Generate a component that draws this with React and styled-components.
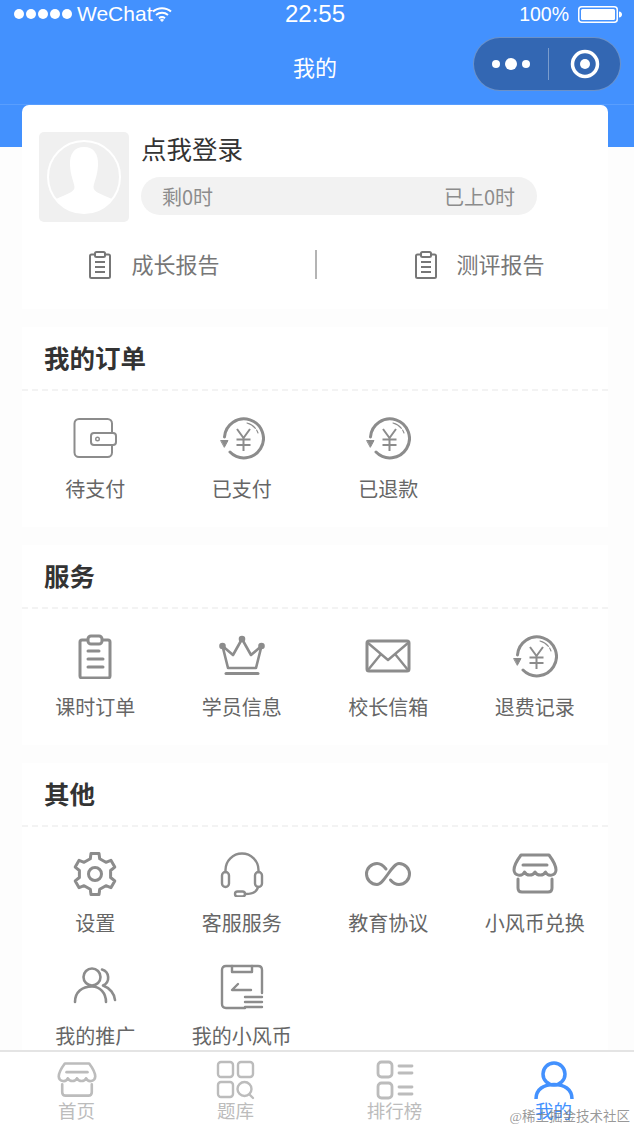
import React from "react";
import styled, { createGlobalStyle } from "styled-components";

const Global = createGlobalStyle`
  * { box-sizing: border-box; }
  html, body { margin: 0; padding: 0; background: #fff; }
  body { font-family: "Liberation Sans", "Noto Sans CJK SC", sans-serif; }
`;

const BLUE = "#4391fe";

const Page = styled.div`
  position: relative;
  width: 634px;
  height: 1130px;
  display: flex;
  flex-direction: column;
  overflow: hidden;
  background: #fff;
`;

const Header = styled.header`
  height: 105px;
  flex-shrink: 0;
  background: ${BLUE};
  border-bottom: 1px solid rgba(255, 255, 255, 0.12);
  color: #fff;
`;

const StatusBar = styled.div`
  height: 37px;
  padding: 0 12px 9px 14px;
  display: grid;
  grid-template-columns: 271px auto 1fr;
  align-items: center;
`;

const StatusLeft = styled.div`
  display: flex;
  align-items: center;
  font-size: 21px;
`;

const Signal = styled.div`
  display: flex;
  gap: 2px;
  margin-right: 5px;
`;

const SignalDot = styled.span`
  width: 10px;
  height: 10px;
  border-radius: 50%;
  background: #fff;
`;

const Clock = styled.div`
  font-size: 24px;
`;

const StatusRight = styled.div`
  display: flex;
  justify-content: flex-end;
  align-items: center;
  gap: 9px;
  font-size: 19.5px;
`;

const NavBar = styled.div`
  height: 67px;
  padding-right: 4px;
  display: grid;
  grid-template-columns: 1fr auto 1fr;
  align-items: start;
`;

const NavTitle = styled.div`
  grid-column: 2;
  margin-top: 13px;
  font-family: "Noto Sans CJK SC", sans-serif;
  font-size: 22px;
  line-height: 32px;
`;

const Capsule = styled.div`
  grid-column: 3;
  justify-self: end;
  margin-right: 9px;
  width: 148px;
  height: 54px;
  display: flex;
  align-items: center;
  padding-left: 17px;
  border-radius: 27px;
  background: #3367b3;
  border: 1.5px solid rgba(255, 255, 255, 0.28);
`;

const CapsuleLine = styled.span`
  width: 1px;
  height: 32px;
  margin: 0 21px 0 13px;
  background: rgba(255, 255, 255, 0.35);
`;

const Main = styled.main`
  flex: 1;
  min-height: 0;
  overflow: hidden;
  padding: 0 26px 0 22px;
  background: linear-gradient(${BLUE} 42px, #fdfdfd 42px);
  font-family: "Noto Sans CJK SC", sans-serif;
`;

const ProfileCard = styled.section`
  height: 204px;
  padding: 27px 17px 0;
  background: #fff;
  border-radius: 7px 7px 0 0;
`;

const ProfileTop = styled.div`
  display: flex;
  gap: 12px;
`;

const Avatar = styled.div`
  width: 90px;
  height: 90px;
  flex-shrink: 0;
  border-radius: 5px;
  background: #f0f0f0;
`;

const ProfileInfo = styled.div`
  display: flex;
  flex-direction: column;
  gap: 11px;
  margin-top: -2px;
`;

const Name = styled.div`
  font-size: 25.5px;
  line-height: 36px;
  color: #333;
`;

const HoursPill = styled.div`
  width: 396px;
  height: 38px;
  padding: 0 22px 0 21px;
  display: flex;
  align-items: center;
  justify-content: space-between;
  border-radius: 19px;
  background: #f2f2f2;
  font-size: 20px;
  color: #8c8c8c;
`;

const Reports = styled.div`
  margin: 28px -17px 0 -13px;
  display: flex;
  justify-content: center;
  align-items: center;
`;

const Report = styled.div`
  display: flex;
  align-items: center;
  gap: 20px;
`;

const ReportText = styled.span`
  margin-top: -4px;
  font-size: 22px;
  line-height: 30px;
  color: #777;
`;

const ReportDivider = styled.span`
  width: 2px;
  height: 29px;
  margin: 0 98px 0 95px;
  background: #b4b4b4;
`;

const Section = styled.section`
  margin-top: 18px;
  padding-bottom: 24px;
  background: #fff;
`;

const SectionTitle = styled.h2`
  margin: 0;
  height: 64px;
  padding: 12px 22px 0;
  border-bottom: 2px dashed #f3f3f3;
  font-size: 25.5px;
  line-height: 36px;
  font-weight: 700;
  color: #333;
`;

const Grid = styled.div`
  display: grid;
  grid-template-columns: repeat(4, 1fr);
  row-gap: ${(p) => (p.$tight ? 27 : 25)}px;
  padding-top: 24px;
`;

const Item = styled.div`
  display: flex;
  flex-direction: column;
  align-items: center;
  gap: ${(p) => (p.$tight ? 12 : 14)}px;
  color: #8c8c8c;
`;

const ItemLabel = styled.div`
  font-size: 20px;
  line-height: 28px;
  color: #666;
  white-space: nowrap;
`;

const TabBar = styled.nav`
  height: 80px;
  flex-shrink: 0;
  margin: 0 -2px 0 -3px;
  padding-right: 3px;
  display: grid;
  grid-template-columns: repeat(4, 1fr);
  background: #fff;
  border-top: 2px solid #e4e4e4;
  font-family: "Noto Sans CJK SC", sans-serif;
`;

const Tab = styled.div`
  padding-top: 8px;
  display: flex;
  flex-direction: column;
  align-items: center;
  color: ${(p) => (p.$active ? BLUE : "#bcbcbc")};
`;

const TabLabel = styled.div`
  margin-top: -2px;
  font-size: 18.5px;
  line-height: 24px;
`;

const Watermark = styled.div`
  position: absolute;
  right: 4px;
  bottom: 3px;
  font-size: 13.5px;
  line-height: 20px;
  font-family: "Liberation Serif", "Noto Sans CJK SC", serif;
  color: rgba(120, 120, 120, 0.75);
`;

const Icon = ({ size = 46, box = 46, w = 3, children }) => (
  <svg
    width={size}
    height={size}
    viewBox={`0 0 ${box} ${box}`}
    fill="none"
    stroke="currentColor"
    strokeWidth={w}
    strokeLinecap="round"
    strokeLinejoin="round"
  >
    {children}
  </svg>
);

const Wallet = () => (
  <Icon w={2}>
    <rect x="2.500" y="4" width="37.500" height="38" rx="4.500" />
    <rect x="19" y="18" width="25" height="12" rx="3" fill="#fff" />
    <circle cx="25.500" cy="24" r="1.800" strokeWidth="1.400" />
  </Icon>
);

const Refund = () => (
  <Icon>
    <path d="M5.500 22A19.500 19.500 0 1 1 11 37" />
    <path d="M28 8A15.500 15.500 0 0 1 39 18" strokeWidth="1.100" strokeDasharray="10 2" />
    <path d="M2 25.500H9L5.500 32Z" fill="currentColor" strokeWidth="1" />
    <path d="M18 14L24.500 23L31 14M24.500 23V36M17.500 24.500H31.500M17.500 30H31.500" strokeWidth="2" strokeLinecap="butt" />
  </Icon>
);

const ClipboardBig = () => (
  <Icon>
    <rect x="8" y="7" width="30" height="38" rx="2" />
    <rect x="16" y="3" width="14" height="8" rx="3" fill="#fff" />
    <path d="M16 18H27M16 26H31M16 34H31" />
  </Icon>
);

const ClipboardSmall = () => (
  <svg width="22" height="28" viewBox="0 0 22 28" fill="none" stroke="#777" strokeWidth="2" strokeLinejoin="round">
    <rect x="1" y="3.500" width="20" height="23.500" rx="1.500" />
    <rect x="6" y="1" width="10" height="5" rx="1.500" fill="#fff" />
    <path d="M6 11H16M6 16H16M6 21H16" />
  </svg>
);

const Crown = () => (
  <Icon>
    <path d="M3.500 13L14 22L23 6L32 22L42.500 13L37 35H9Z" strokeWidth="2.600" />
    <path d="M7 40.500H39" />
    <circle cx="3.500" cy="13" r="1.800" fill="currentColor" />
    <circle cx="23" cy="6" r="1.800" fill="currentColor" />
    <circle cx="42.500" cy="13" r="1.800" fill="currentColor" />
  </Icon>
);

const Mail = () => (
  <Icon>
    <rect x="2" y="8" width="42" height="30" rx="2" />
    <path d="M3 10L23 27L43 10M3 37L16 21M43 37L30 21" strokeWidth="2.400" />
  </Icon>
);

// six toothed gear, built from angles so the teeth stay regular
const gearPath = () => {
  const pts = [];
  for (let i = 0; i < 6; i++) {
    const a = (Math.PI / 3) * i - Math.PI / 2;
    [[-0.3, 16], [-0.19, 21], [0.19, 21], [0.3, 16]].forEach(([d, r]) => {
      pts.push(`${(23 + Math.cos(a + d) * r).toFixed(1)} ${(23 + Math.sin(a + d) * r).toFixed(1)}`);
    });
  }
  return "M" + pts.join("L") + "Z";
};

const Gear = () => (
  <Icon>
    <path d={gearPath()} />
    <circle cx="23" cy="23" r="6.500" />
  </Icon>
);

const Headset = () => (
  <Icon w={2.400}>
    <path d="M6.500 21V19A16.500 16.500 0 0 1 39.500 19V21" />
    <rect x="3" y="21" width="7" height="15" rx="3.500" />
    <rect x="36" y="21" width="7" height="15" rx="3.500" />
    <path d="M39 36C38 41 33 43 26 43" />
    <rect x="16" y="40.500" width="10" height="5" rx="2.500" />
  </Icon>
);

const Infinity8 = () => (
  <Icon>
    <path d="M21 18C18 14 15 12.500 12 12.500A10.500 10.500 0 0 0 12 33.500C19 33.500 27 12.500 34 12.500A10.500 10.500 0 0 1 34 33.500C31 33.500 28 32 25.500 29" />
  </Icon>
);

const Store = ({ size = 46 }) => (
  <Icon size={size}>
    <path d="M9 4H37C40 8 44 14 44 19A5.500 5.500 0 0 1 33.500 21A6 6 0 0 1 23 21A6 6 0 0 1 12.500 21A5.500 5.500 0 0 1 2 19C2 14 6 8 9 4Z" />
    <path d="M11 14H35" />
    <path d="M6 28V37Q6 41 10 41H36Q40 41 40 37V28" />
  </Icon>
);

const Users = () => (
  <Icon w={2.600}>
    <circle cx="20" cy="13" r="8.500" />
    <path d="M3 38C3 28 10 22.500 20 22.500C28 22.500 34 29 34 38" />
    <path d="M30 5.500A8.500 8.500 0 0 1 31 21.500C38 24 42.500 30 43 36" />
  </Icon>
);

const Coins = () => (
  <Icon w={2.400}>
    <path d="M26 44H7Q3 44 3 40V6Q3 2 7 2H39Q43 2 43 6V29" />
    <path d="M13 2V8H33V2" />
    <path d="M19 20L13 26H32" />
    <path d="M26 33H43M26 38H43M26 43H43" />
  </Icon>
);

const Avatars = () => (
  <svg width="90" height="90" viewBox="0 0 90 90">
    <circle cx="45" cy="45" r="36" fill="none" stroke="#fff" strokeWidth="2" />
    <path
      d="M45 15C35 15 30.500 22 31 33C31.500 44 35 50 35.500 55C35.800 60 28 62 17 67C24 76 34 81 45 81C56 81 66 76 73 67C62 62 54.200 60 54.500 55C55 50 58.500 44 59 33C59.500 22 55 15 45 15Z"
      fill="#fff"
    />
  </svg>
);

const Wifi = () => (
  <svg width="20" height="16" viewBox="0 0 20 16" fill="none" stroke="#fff" strokeWidth="2">
    <path d="M1 5.500C6 1 14 1 19 5.500M4 9C7.500 6 12.500 6 16 9M7 12.200C8.800 10.800 11.200 10.800 13 12.200" />
    <path d="M8.500 13.800L10 15.500L11.500 13.800C10.600 13 9.400 13 8.500 13.800Z" fill="#fff" strokeWidth="1" />
  </svg>
);

const Battery = () => (
  <svg width="44" height="17" viewBox="0 0 44 17">
    <rect x="0.750" y="0.750" width="38.500" height="15.500" rx="3" fill="none" stroke="#fff" strokeWidth="1.500" />
    <rect x="3" y="3" width="34" height="11" rx="1.500" fill="#fff" />
    <path d="M41 5.500C43 5.500 44 7 44 8.500C44 10 43 11.500 41 11.500Z" fill="#fff" />
  </svg>
);

const MoreDots = () => (
  <svg width="44" height="14" viewBox="0 0 44 14" fill="#fff">
    <circle cx="5" cy="7" r="4" />
    <circle cx="20" cy="7" r="6" />
    <circle cx="35" cy="7" r="4" />
  </svg>
);

const Target = () => (
  <svg width="30" height="30" viewBox="0 0 30 30">
    <circle cx="15" cy="15" r="12.500" fill="none" stroke="#fff" strokeWidth="3.500" />
    <circle cx="15" cy="15" r="5" fill="#fff" />
  </svg>
);

const QuizTab = () => (
  <Icon size={40} box={40} w={2.400}>
    <rect x="2" y="2" width="15" height="15" rx="3" />
    <rect x="22" y="2" width="15" height="15" rx="3" />
    <rect x="2" y="22" width="15" height="15" rx="3" />
    <circle cx="28.500" cy="29" r="7" />
    <path d="M33.500 34.500L37 38" />
  </Icon>
);

const RankTab = () => (
  <Icon size={40} box={40} w={2.800}>
    <rect x="3" y="2" width="14" height="15" rx="3.500" />
    <rect x="3" y="23" width="14" height="15" rx="3.500" />
    <path d="M24 6H37M24 13H37M24 27H37M24 34H37" />
  </Icon>
);

const PersonTab = () => (
  <Icon size={40} box={40} w={3.500}>
    <circle cx="20" cy="14" r="11" />
    <path d="M2 39C2 29 10 24.500 20 24.500C30 24.500 38 29 38 39" strokeLinecap="butt" />
  </Icon>
);

const sections = [
  {
    title: "我的订单",
    items: [
      ["待支付", Wallet],
      ["已支付", Refund],
      ["已退款", Refund],
    ],
  },
  {
    title: "服务",
    items: [
      ["课时订单", ClipboardBig],
      ["学员信息", Crown],
      ["校长信箱", Mail],
      ["退费记录", Refund],
    ],
  },
  {
    title: "其他",
    tight: true,
    items: [
      ["设置", Gear],
      ["客服服务", Headset],
      ["教育协议", Infinity8],
      ["小风币兑换", Store],
      ["我的推广", Users],
      ["我的小风币", Coins],
    ],
  },
];

const tabs = [
  ["首页", () => <Store size={40} />],
  ["题库", QuizTab],
  ["排行榜", RankTab],
  ["我的", PersonTab],
];

export default function App() {
  return (
    <Page>
      <Global />
      <Header>
        <StatusBar>
          <StatusLeft>
            <Signal>
              {[0, 1, 2, 3, 4].map((i) => (
                <SignalDot key={i} />
              ))}
            </Signal>
            WeChat
            <Wifi />
          </StatusLeft>
          <Clock>22:55</Clock>
          <StatusRight>
            100%
            <Battery />
          </StatusRight>
        </StatusBar>
        <NavBar>
          <NavTitle>我的</NavTitle>
          <Capsule>
            <MoreDots />
            <CapsuleLine />
            <Target />
          </Capsule>
        </NavBar>
      </Header>
      <Main>
        <ProfileCard>
          <ProfileTop>
            <Avatar>
              <Avatars />
            </Avatar>
            <ProfileInfo>
              <Name>点我登录</Name>
              <HoursPill>
                <span>剩0时</span>
                <span>已上0时</span>
              </HoursPill>
            </ProfileInfo>
          </ProfileTop>
          <Reports>
            <Report>
              <ClipboardSmall />
              <ReportText>成长报告</ReportText>
            </Report>
            <ReportDivider />
            <Report>
              <ClipboardSmall />
              <ReportText>测评报告</ReportText>
            </Report>
          </Reports>
        </ProfileCard>
        {sections.map((s) => (
          <Section key={s.title}>
            <SectionTitle>{s.title}</SectionTitle>
            <Grid $tight={s.tight}>
              {s.items.map(([label, Glyph]) => (
                <Item key={label} $tight={s.tight}>
                  <Glyph />
                  <ItemLabel>{label}</ItemLabel>
                </Item>
              ))}
            </Grid>
          </Section>
        ))}
      </Main>
      <TabBar>
        {tabs.map(([label, Glyph]) => (
          <Tab key={label} $active={label === "我的"}>
            <Glyph />
            <TabLabel>{label}</TabLabel>
          </Tab>
        ))}
      </TabBar>
      <Watermark>@稀土掘金技术社区</Watermark>
    </Page>
  );
}
